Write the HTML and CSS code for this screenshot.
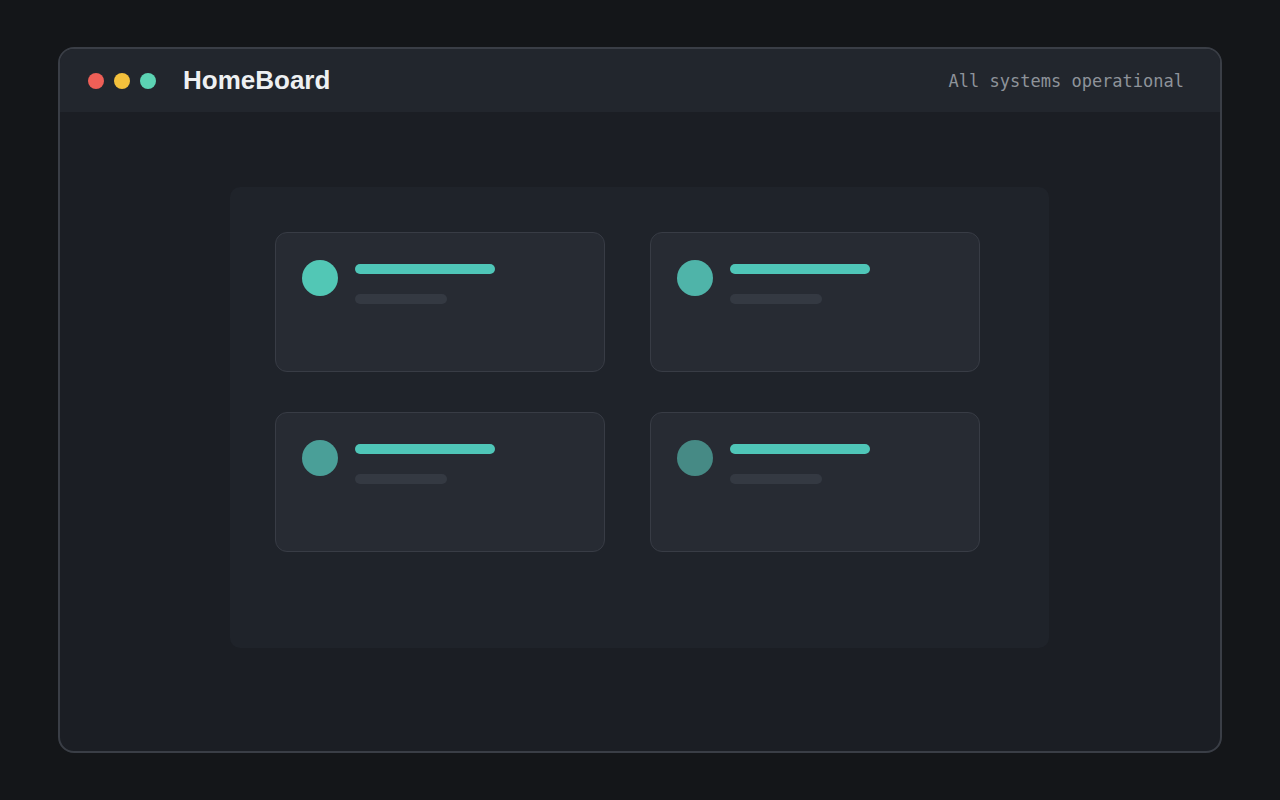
FILE: index.html
```html
<!DOCTYPE html>
<html lang="en">
<head>
  <meta charset="UTF-8" />
  <meta name="viewport" content="width=device-width, initial-scale=1" />
  <title>HomeBoard</title>
  <link rel="stylesheet" href="styles.css">
</head>
<body>
  <div class="window">
    <header class="titlebar">
      <div class="lights" aria-hidden="true">
        <span class="light red"></span>
        <span class="light yellow"></span>
        <span class="light green"></span>
      </div>
      <div class="brand">HomeBoard</div>
      <div class="status">All systems operational</div>
    </header>

    <main class="content">
      <section class="panel" aria-label="Devices">
        <div class="tile">
          <span class="avatar a1"></span>
          <div class="lines">
            <span class="line main"></span>
            <span class="line sub"></span>
          </div>
        </div>
        <div class="tile">
          <span class="avatar a2"></span>
          <div class="lines">
            <span class="line main"></span>
            <span class="line sub"></span>
          </div>
        </div>
        <div class="tile">
          <span class="avatar a3"></span>
          <div class="lines">
            <span class="line main"></span>
            <span class="line sub"></span>
          </div>
        </div>
        <div class="tile">
          <span class="avatar a4"></span>
          <div class="lines">
            <span class="line main"></span>
            <span class="line sub"></span>
          </div>
        </div>
      </section>
    </main>
  </div>
</body>
</html>
```

FILE: styles.css
```css
:root {
  --page-bg: #141619;
  --window-bg: #1b1e24;
  --titlebar-bg: #22262d;
  --panel-bg: #1f232a;
  --tile-bg: #272b33;
  --tile-border: #383c45;
  --window-border: #3a3e46;
  --accent: #52c7b5;
  --muted-bar: #343942;
  --text-primary: #eef0f2;
  --text-secondary: #8e939a;
}

*, *::before, *::after {
  box-sizing: border-box;
}

body {
  margin: 0;
  background: var(--page-bg);
  min-height: 100vh;
  font-family: "Liberation Sans", Arial, sans-serif;
  padding: 47px 58px 47px 58px;
}

/* Window */
.window {
  height: 706px;
  background: var(--window-bg);
  border: 2px solid var(--window-border);
  border-radius: 16px;
  overflow: hidden;
  display: flex;
  flex-direction: column;
}

.titlebar {
  height: 63px;
  flex-shrink: 0;
  background: var(--titlebar-bg);
  display: flex;
  align-items: center;
  padding: 0 36px 0 28px;
}

.lights {
  display: flex;
  gap: 10px;
}

.light {
  width: 16px;
  height: 16px;
  border-radius: 50%;
}

.light.red { background: #ee5f57; }
.light.yellow { background: #f3c03c; }
.light.green { background: #5cd3b3; }

.brand {
  margin-left: 27px;
  font-size: 26px;
  font-weight: 700;
  color: var(--text-primary);
}

.status {
  margin-left: auto;
  font-family: "DejaVu Sans Mono", "Liberation Mono", monospace;
  font-size: 17px;
  color: var(--text-secondary);
}

/* Content */
.content {
  flex-grow: 1;
  padding: 75px 0 0 170px;
}

.panel {
  width: 819px;
  height: 461px;
  background: var(--panel-bg);
  border-radius: 10px;
  padding: 45px 0 0 45px;
  display: grid;
  grid-template-columns: 330px 330px;
  grid-auto-rows: 140px;
  column-gap: 45px;
  row-gap: 40px;
  align-content: start;
}

.tile {
  background: var(--tile-bg);
  border: 1px solid var(--tile-border);
  border-radius: 12px;
  padding: 27px 26px;
  display: flex;
  align-items: flex-start;
  gap: 17px;
}

.avatar {
  width: 36px;
  height: 36px;
  border-radius: 50%;
  background: var(--accent);
  flex-shrink: 0;
}

.avatar.a2 { background: #4fb4a9; }
.avatar.a3 { background: #4a9f98; }
.avatar.a4 { background: #468a85; }

.lines {
  display: flex;
  flex-direction: column;
  gap: 20px;
  padding-top: 4px;
}

.line {
  display: block;
  height: 10px;
  border-radius: 5px;
}

.line.main {
  width: 140px;
  background: #4fc6b8;
}

.line.sub {
  width: 92px;
  background: var(--muted-bar);
}
```
